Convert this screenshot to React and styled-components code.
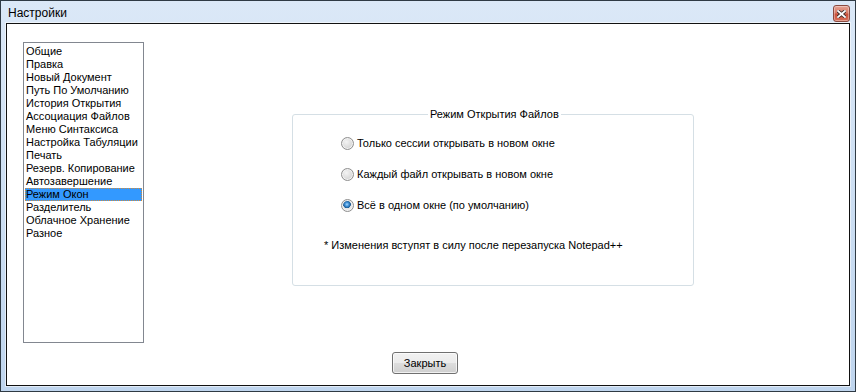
import styled, { createGlobalStyle } from "styled-components";

const categories = [
    "Общие",
    "Правка",
    "Новый Документ",
    "Путь По Умолчанию",
    "История Открытия",
    "Ассоциация Файлов",
    "Меню Синтаксиса",
    "Настройка Табуляции",
    "Печать",
    "Резерв. Копирование",
    "Автозавершение",
    "Режим Окон",
    "Разделитель",
    "Облачное Хранение",
    "Разное",
];

const modes = [
    { label: "Только сессии открывать в новом окне", checked: false },
    { label: "Каждый файл открывать в новом окне", checked: false },
    { label: "Всё в одном окне (по умолчанию)", checked: true },
];

function CloseIcon() {
    return (
        <svg width="9" height="8" viewBox="0 0 9 8">
            <path d="M1 1 L8 7 M8 1 L1 7" stroke="#3a2a28" strokeWidth="3.4" strokeLinecap="square" />
            <path d="M1 1 L8 7 M8 1 L1 7" stroke="#ffffff" strokeWidth="1.8" strokeLinecap="square" />
        </svg>
    );
}

export default function App() {
    return (
        <>
            <GlobalStyle />
            <Window>
                <TitleBar>
                    <Title>Настройки</Title>
                    <CloseButton>
                        <CloseIcon />
                    </CloseButton>
                </TitleBar>
                <Client>
                    <Body>
                        <List>
                            {categories.map(c => (
                                <ListItem key={c} $selected={c === "Режим Окон"}>{c}</ListItem>
                            ))}
                        </List>
                        <Main>
                            <GroupBox>
                                <Legend>Режим Открытия Файлов</Legend>
                                <Options>
                                    {modes.map(m => (
                                        <Option key={m.label}>
                                            <Radio $checked={m.checked} />
                                            <span>{m.label}</span>
                                        </Option>
                                    ))}
                                </Options>
                                <Note>* Изменения вступят в силу после перезапуска Notepad++</Note>
                            </GroupBox>
                        </Main>
                    </Body>
                    <Footer>
                        <Button>Закрыть</Button>
                    </Footer>
                </Client>
            </Window>
        </>
    );
}

const GlobalStyle = createGlobalStyle`
    html, body {
        margin: 0;
        padding: 0;
        background: #ffffff;
    }

    * {
        box-sizing: border-box;
    }
`

const Window = styled.div`
    width: 856px;
    height: 392px;
    border: 1px solid #2f3a44;
    padding: 0 5px 5px 5px;
    background: linear-gradient(to bottom, #dbe8f7 0%, #cfe0f3 40%, #bfd5ee 100%);

    display: flex;
    flex-direction: column;
    font-family: "Liberation Sans", Arial, sans-serif;
`

const TitleBar = styled.div`
    height: 22px;
    padding-left: 2px;

    display: flex;
    align-items: flex-start;
    justify-content: space-between;
`

const Title = styled.div`
    margin-top: 5px;
    font-size: 12px;
    line-height: 15px;
    color: #000000;
`

const CloseButton = styled.div`
    width: 17px;
    height: 17px;
    margin-top: 4px;
    border: 1px solid #8a4a40;
    border-radius: 3px;
    background: linear-gradient(to bottom, #e6a394 0%, #d87a66 45%, #c9503a 55%, #d8705a 100%);
    box-shadow: inset 0 0 0 1px rgba(255, 255, 255, 0.35);

    display: flex;
    align-items: center;
    justify-content: center;
`

const Client = styled.div`
    flex: 1;
    border: 1px solid #111111;
    background: #ffffff;
    box-shadow: 0 0 0 1px rgba(255, 255, 255, 0.55);

    display: flex;
    flex-direction: column;
`

const Body = styled.div`
    padding: 18px 0 0 16px;

    display: flex;
`

const List = styled.div`
    width: 121px;
    height: 301px;
    padding: 2px 1px 1px 1px;
    border: 1px solid #828790;

    display: flex;
    flex-direction: column;
`

const ListItem = styled.div`
    height: 13px;
    padding-left: 1px;
    font-size: 11px;
    line-height: 13px;
    color: #000000;
    white-space: nowrap;
    background: ${p => (p.$selected ? "#3399ff" : "transparent")};
    outline: ${p => (p.$selected ? "1px dotted #d08a3c" : "none")};
    outline-offset: -1px;
`

const Main = styled.div`
    flex: 1;
    padding: 72px 0 0 148px;
`

const GroupBox = styled.div`
    position: relative;
    width: 402px;
    height: 172px;
    padding: 22px 0 0 31px;
    border: 1px solid #d5dfe5;
    border-radius: 3px;
`

const Legend = styled.span`
    position: absolute;
    top: -7px;
    left: 135px;
    padding: 0 2px;
    background: #ffffff;
    font-size: 11px;
    line-height: 13px;
    color: #000000;
`

const Options = styled.div`
    padding-left: 17px;

    display: flex;
    flex-direction: column;
    gap: 18px;
`

const Option = styled.div`
    height: 13px;
    font-size: 11px;
    line-height: 13px;
    color: #000000;

    display: flex;
    align-items: center;
    gap: 3px;
`

const Radio = styled.span`
    width: 13px;
    height: 13px;
    border-radius: 50%;
    border: 1px solid #8f8f8f;
    background: ${p =>
        p.$checked
            ? "radial-gradient(circle at 45% 40%, #a9d8ff 0%, #3d8fd6 22%, #1d5a92 40%, #e4e4e4 46%, #f6f6f6 100%)"
            : "radial-gradient(circle at 40% 35%, #f4f4f4 0%, #dcdcdc 55%, #c9c9c9 100%)"};
    box-shadow: inset 0 0 0 1px #f2f2f2;
    flex-shrink: 0;
`

const Note = styled.div`
    margin-top: 27px;
    font-size: 11px;
    line-height: 13px;
    color: #000000;
`

const Footer = styled.div`
    padding: 9px 6px 0 0;

    display: flex;
    justify-content: center;
`

const Button = styled.div`
    width: 66px;
    height: 22px;
    border: 1px solid #707070;
    border-radius: 3px;
    background: linear-gradient(to bottom, #f2f2f2 0%, #ebebeb 50%, #dddddd 51%, #cfcfcf 100%);
    box-shadow: inset 0 0 0 1px rgba(255, 255, 255, 0.7);
    font-size: 11px;
    color: #000000;

    display: flex;
    align-items: center;
    justify-content: center;
`
